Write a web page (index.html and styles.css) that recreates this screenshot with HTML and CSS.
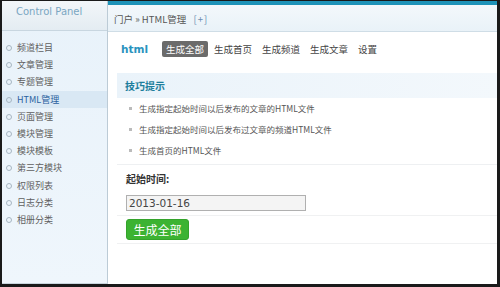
FILE: index.html
```html
<!DOCTYPE html>
<html>
<head>
<meta charset="utf-8">
<link rel="stylesheet" href="styles.css">
</head>
<body>
<div class="frame">
  <aside class="side">
    <div class="side-head">Control Panel</div>
    <ul class="menu">
      <li>频道栏目</li>
      <li>文章管理</li>
      <li>专题管理</li>
      <li class="on">HTML管理</li>
      <li>页面管理</li>
      <li>模块管理</li>
      <li>模块模板</li>
      <li>第三方模块</li>
      <li>权限列表</li>
      <li>日志分类</li>
      <li>相册分类</li>
    </ul>
  </aside>
  <main class="main">
    <div class="crumb">门户 » HTML管理 <span class="plus">[+]</span></div>
    <div class="tabs">
      <span class="title">html</span>
      <span class="tab active">生成全部</span>
      <span class="tab">生成首页</span>
      <span class="tab">生成频道</span>
      <span class="tab">生成文章</span>
      <span class="tab">设置</span>
    </div>
    <div class="tips">
      <div class="tips-head">技巧提示</div>
      <ul class="tips-list">
        <li>生成指定起始时间以后发布的文章的HTML文件</li>
        <li>生成指定起始时间以后发布过文章的频道HTML文件</li>
        <li>生成首页的HTML文件</li>
      </ul>
    </div>
    <div class="form">
      <div class="label">起始时间:</div>
      <div class="field"><input class="input" type="text" value="2013-01-16"></div>
      <div class="actions"><button class="btn">生成全部</button></div>
    </div>
  </main>
</div>
</body>
</html>
```

FILE: styles.css
```css
* { box-sizing: border-box; }
html, body { margin: 0; padding: 0; }
body {
  width: 500px; height: 287px; overflow: hidden;
  font-family: "Noto Sans CJK SC", "DejaVu Sans", sans-serif;
  font-size: 11px; color: #555;
  background: #1a1a1a;
}
.frame {
  position: relative;
  margin: 1px 3px 3px 2px;
  height: 283px;
  display: flex;
  background: #fff;
}
.side {
  width: 106px;
  flex: none;
  background: linear-gradient(#e8f2fa, #eff6fc);
  border-right: 1px solid #bccbd6;
  border-bottom: 1px solid #c8d4dc;
}
.side-head {
  height: 30px;
  border-bottom: 1px solid #c8d6e0;
  background: linear-gradient(#f2f6f9, #e4ecf2);
  color: #7aa6c2;
  font-family: "DejaVu Sans", sans-serif;
  font-size: 10px;
  padding: 5px 0 0 14px;
}
.menu { list-style: none; margin: 8px 0 0; padding: 0; }
.menu li {
  height: 17.2px;
  line-height: 17px;
  padding-left: 15px;
  position: relative;
  color: #5f5f5f;
  font-size: 9px;
}
.menu li::before {
  content: "";
  position: absolute;
  left: 4px; top: 6px;
  width: 4px; height: 4px;
  border: 1px solid #a7b6c2;
  border-radius: 50%;
}
.menu li.on { background: #d9e8f4; color: #2a5f9e; }
.main {
  flex: 1;
  border-top: 4px solid #1e93b8;
}
.crumb {
  height: 27px;
  background: linear-gradient(#f3f8fb, #e9f2f8);
  border-bottom: 1px solid #cfdde6;
  padding: 7px 0 0 6px;
  color: #555;
  font-size: 9.5px;
}
.plus { color: #6b8db0; margin-left: 5px; letter-spacing: 1px; }
.tabs {
  display: flex;
  align-items: center;
  padding: 1px 0 0 13px;
  height: 33px;
}
.title {
  font-family: "DejaVu Sans", sans-serif;
  font-weight: bold;
  color: #2a93be;
  font-size: 10.5px;
  margin-right: 14px;
}
.tab {
  font-size: 9.5px;
  color: #444;
  padding: 1px 4px;
  margin-right: 2px;
  border-radius: 2px;
}
.tab.active { background: #6b6b6b; color: #fff; margin-right: 2px; }
.tips { margin: 8px 0 0 9px; }
.tips-head {
  height: 25px;
  background: linear-gradient(90deg, #eaf3fa, #f3f8fc);
  color: #1d7e9c;
  font-weight: bold;
  font-size: 10px;
  padding: 5px 0 0 8px;
}
.tips-list {
  list-style: none;
  margin: 0; padding: 0 0 3px 0;
  border-bottom: 1px solid #eef0f2;
}
.tips-list li {
  height: 21px;
  line-height: 21px;
  padding-left: 22px;
  position: relative;
  color: #555;
  font-size: 8.5px;
}
.tips-list li::before {
  content: "";
  position: absolute;
  left: 12px; top: 9px;
  width: 3px; height: 3px;
  background: #bbb;
}
.form { margin-left: 9px; }
.label {
  font-weight: bold;
  color: #333;
  font-size: 10px;
  padding: 6px 0 0 9px;
  height: 29px;
}
.field {
  padding: 0 0 4px 9px;
  border-bottom: 1px solid #f0f1f2;
}
.input {
  width: 180px; height: 16px;
  border: 1px solid #b0b0b0;
  background: #f4f4f4;
  font-family: "DejaVu Sans", sans-serif;
  font-size: 10.5px;
  color: #444;
  padding: 0 2px;
  margin: 0;
}
.actions {
  padding: 3px 0 3px 9px;
  border-bottom: 1px solid #f0f1f2;
}
.btn {
  width: 63px; height: 21px;
  background: #3cb332;
  border: 1px solid #34a32b;
  border-radius: 3px;
  color: #fff;
  font-family: "Noto Sans CJK SC", sans-serif;
  font-size: 12px;
  padding: 0;
  margin: 0;
}
```
